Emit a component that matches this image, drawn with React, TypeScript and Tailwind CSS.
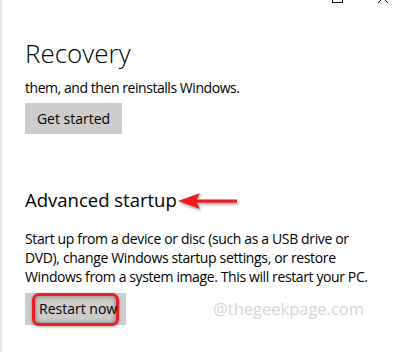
import React, { useLayoutEffect, useRef } from "react";

const font = { fontFamily: "'Open Sans', 'Noto Sans', sans-serif" };

// stretches a single line of text so it ends where the screenshot's line ends
const FitLine = ({ text, width, className = "" }: { text: string; width: number; className?: string }) => {
  const ref = useRef<HTMLSpanElement>(null);

  useLayoutEffect(() => {
    const el = ref.current;
    if (!el) return;
    const measure = () => {
      el.style.letterSpacing = "0px";
      const w = el.getBoundingClientRect().width;
      el.style.letterSpacing = `${(width - w) / (text.length - 1)}px`;
    };
    measure();
    document.fonts?.ready.then(measure);
  }, [text, width]);

  return (
    <span ref={ref} className={`block w-fit whitespace-nowrap ${className}`}>
      {text}
    </span>
  );
};

const WindowChrome = () => (
  <svg className="absolute left-0 top-0" width="394" height="6" viewBox="0 0 394 6">
    <rect x="330.5" y="-8" width="10" height="10.5" fill="none" stroke="#111" strokeWidth="1" />
    <path d="M376 -7 L386 3 M386 -7 L376 3" stroke="#111" strokeWidth="1" />
  </svg>
);

const RedArrow = () => (
  <svg
    className="absolute left-[151px] top-[3px]"
    width="70"
    height="22"
    viewBox="0 0 70 22"
  >
    <defs>
      <filter id="sh" x="-20%" y="-50%" width="140%" height="200%">
        <feDropShadow dx="1" dy="2" stdDeviation="1.2" floodColor="#000" floodOpacity="0.35" />
      </filter>
    </defs>
    <g filter="url(#sh)" fill="#ec1c24">
      <path d="M2 10 L24 2 L20 10 L24 18 Z" />
      <rect x="20" y="8.5" width="41" height="3.2" />
    </g>
  </svg>
);

export default function App() {
  return (
    <div
      className="relative h-[352px] w-[394px] overflow-hidden border-l-2 border-[#e8e8e8] bg-white text-black"
      style={font}
    >
      <WindowChrome />
      <div className="flex flex-col items-start pl-[23px] pt-[39px]">
        <h1 className="text-[26px] font-light leading-[28px]">Recovery</h1>
        <div className="mt-[11px] text-[14px] leading-[19px]">
          <FitLine text="them, and then reinstalls Windows." width={215} />
        </div>
        <button className="mt-[6px] h-[31px] w-[97px] bg-[#cccccc] text-[14px] leading-[31px]">
          Get started
        </button>

        <div className="relative mt-[54px]">
          <h2 className="text-[18.5px] font-normal leading-[24px]">Advanced startup</h2>
          <RedArrow />
        </div>

        <div className="mt-[17px] text-[14px] leading-[19px]">
          <FitLine text="Start up from a device or disc (such as a USB drive or" width={324} />
          <FitLine text="DVD), change Windows startup settings, or restore" width={311} />
          <FitLine text="Windows from a system image. This will restart your PC." width={343} />
        </div>

        <div className="mt-[7px] flex items-center">
          <div className="relative h-[32px] w-[101px] bg-[#cccccc]">
            <div className="absolute left-[7px] top-0 h-[33px] w-[87px] rounded-[7px] border-[3px] border-[#ec1c24] shadow-[inset_0_0_5px_rgba(0,0,0,0.45),0_1px_3px_rgba(0,0,0,0.35)]" />
            <span className="absolute left-[14px] top-0 text-[14px] leading-[32px]">Restart now</span>
          </div>
          <div className="ml-[87px] text-[16.5px] text-[#d6d6d6]">
            <FitLine text="@thegeekpage.com" width={151} />
          </div>
        </div>
      </div>
    </div>
  );
}
